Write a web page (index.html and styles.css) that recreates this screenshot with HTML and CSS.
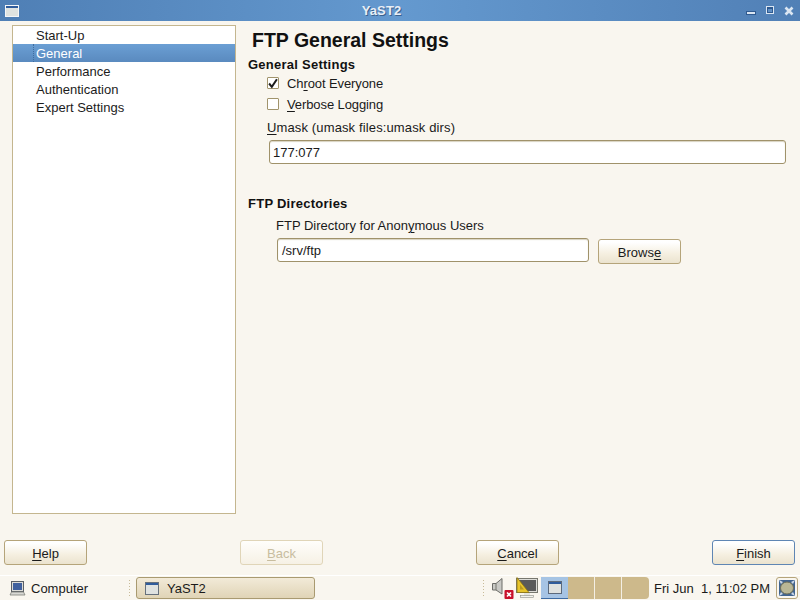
FILE: index.html
```html
<!DOCTYPE html>
<html lang="en">
<head>
<meta charset="utf-8">
<title>YaST2</title>
<link rel="stylesheet" href="styles.css">
</head>
<body>
<div class="desktop">
  <header class="titlebar">
    <svg class="win-icon" width="14" height="12" viewBox="0 0 14 12"><rect x="0.5" y="0.5" width="13" height="11" fill="#dfe3e0" stroke="#f4f6f8"/><rect x="1" y="1" width="12" height="2" fill="#2f5c9c"/></svg>
    <span class="title-text">YaST2</span>
    <div class="win-controls">
      <svg class="win-min" width="10" height="5" viewBox="0 0 10 5"><rect x="0.5" y="0.5" width="9" height="3" fill="#dbe6f2" stroke="#2f5a90"/></svg>
      <svg width="8" height="9" viewBox="0 0 8 9"><rect x="0.5" y="0.5" width="7" height="7" fill="#2f5a90" stroke="#dbe6f2"/><rect x="2" y="3" width="4" height="3" fill="#5f8fc4"/></svg>
      <svg width="10" height="10" viewBox="0 0 10 10"><path d="M1.5 1.5L8.5 8.5M8.5 1.5L1.5 8.5" stroke="#dbe6f2" stroke-width="2.6"/></svg>
    </div>
  </header>

  <main class="content">
    <ul class="sidebar">
      <li class="side-item">Start-Up</li>
      <li class="side-item selected">General</li>
      <li class="side-item">Performance</li>
      <li class="side-item">Authentication</li>
      <li class="side-item">Expert Settings</li>
    </ul>
    <section class="panel">
      <h1 class="heading">FTP General Settings</h1>
      <h2 class="group-title first">General Settings</h2>
      <div class="group-body">
        <label class="check-row">
          <span class="checkbox"><svg width="11" height="11" viewBox="0 0 11 11"><path d="M1.2 5.500L4.200 9.200L9.800 0.800" fill="none" stroke="#1c1c1c" stroke-width="2.200"/></svg></span>
          <span>Ch<u>r</u>oot Everyone</span>
        </label>
        <label class="check-row second">
          <span class="checkbox"></span>
          <span><u>V</u>erbose Logging</span>
        </label>
        <div class="field-label umask-label"><u>U</u>mask (umask files:umask dirs)</div>
        <div class="input umask">177:077</div>
      </div>
      <h2 class="group-title dirs">FTP Directories</h2>
      <div class="dir-body">
        <div class="field-label dir-label">FTP Directory for Anon<u>y</u>mous Users</div>
        <div class="dir-row">
          <div class="input dir-input">/srv/ftp</div>
          <div class="button browse">Brows<u>e</u></div>
        </div>
      </div>
    </section>
  </main>

  <footer class="actions">
    <div class="button action"><span><u>H</u>elp</span></div>
    <div class="button action disabled"><span><u>B</u>ack</span></div>
    <div class="button action"><span><u>C</u>ancel</span></div>
    <div class="button action focus"><span><u>F</u>inish</span></div>
  </footer>

  <nav class="taskbar">
    <div class="menu-item">
      <svg width="17" height="17" viewBox="0 0 17 17"><rect x="2.500" y="1.500" width="12" height="10" fill="#dcdcd8" stroke="#5a5f66"/><rect x="4" y="3" width="9" height="7" fill="#40609e"/><path d="M1 15L2.500 12H14.500L16 15Z" fill="#d8d8d4" stroke="#7d8078" stroke-width="0.800"/></svg>
      <span>Computer</span>
    </div>
    <div class="handle"></div>
    <div class="task">
      <svg width="14" height="13" viewBox="0 0 14 13"><rect x="0.500" y="0.500" width="13" height="12" fill="#dfe2e0" stroke="#66707c"/><rect x="1" y="1" width="12" height="2" fill="#2f5c9c"/></svg>
      <span>YaST2</span>
    </div>
    <div class="tray">
      <div class="handle tray-handle"></div>
      <svg class="tray-sound" width="24" height="22" viewBox="0 0 24 22"><path d="M1.500 6.500H5L11 1.500V17L5 13H1.500Z" fill="#c9c9c5" stroke="#6c6c68"/><path d="M5 6.500V13" stroke="#77776f"/><rect x="13.500" y="13" width="9" height="9" rx="1" fill="#c8102a"/><path d="M16 15.500L20 19.500M20 15.500L16 19.500" stroke="#fff" stroke-width="1.600"/></svg>
      <svg class="tray-screen" width="22" height="22" viewBox="0 0 22 22"><rect x="0.500" y="1.500" width="21" height="14" fill="#dcdcd8" stroke="#77776f"/><rect x="2" y="3" width="18" height="11" fill="#5a5a5a"/><path d="M1 0.500L13 15.500H1Z" fill="#e7c42c" stroke="#8a7414" stroke-width="0.800"/><path d="M4 12.500H8L4 7.500Z" fill="#b99a20"/><rect x="8" y="16" width="6" height="3" fill="#e4e4e0"/><rect x="4.500" y="18.500" width="13" height="2" fill="#f2f2ee" stroke="#8c8c86" stroke-width="0.600"/></svg>
      <div class="pager">
        <div class="workspace active">
          <svg width="14" height="13" viewBox="0 0 14 13"><rect x="0.500" y="0.500" width="13" height="12" fill="#dfe2e0" stroke="#5c6a7c"/><rect x="1" y="1" width="12" height="2" fill="#2f5c9c"/></svg>
        </div>
        <div class="workspace"></div>
        <div class="workspace"></div>
        <div class="workspace"></div>
      </div>
    </div>
    <div class="clock">Fri Jun &nbsp;1, 11:02 PM</div>
    <div class="show-desktop">
      <svg width="18" height="18" viewBox="0 0 18 18"><rect x="1" y="1" width="16" height="16" fill="#41648f"/><ellipse cx="9" cy="9" rx="6.500" ry="6" fill="#b9b795" stroke="#6e6e58"/><path d="M1 1L5 3L3 5ZM17 1L13 3L15 5ZM1 17L5 15L3 13ZM17 17L13 15L15 13Z" fill="#cfd9e6"/></svg>
    </div>
  </nav>
</div>
</body>
</html>
```
FILE: styles.css
```css
* { box-sizing: border-box; }
html, body { margin: 0; padding: 0; }
body {
  font-family: "Liberation Sans", sans-serif;
  font-size: 13px;
  color: #1a1a1a;
  background: #f9f6ef;
}
.desktop {
  width: 800px;
  height: 600px;
  display: flex;
  flex-direction: column;
  overflow: hidden;
}
u { text-underline-offset: 2px; text-decoration-thickness: 1px; }

.titlebar {
  height: 21px;
  flex: none;
  display: flex;
  align-items: center;
  padding: 0 6px 0 5px;
  background: linear-gradient(to right, #4f7fb5, #6499cf 50%, #5180b6);
}
.title-text {
  flex: 1;
  text-align: center;
  color: #e8eef6;
  font-weight: bold;
  font-size: 13px;
  letter-spacing: 0.1px;
  margin-right: 2px;
  text-shadow: 1px 1px 0 #3a628f;
}
.win-controls {
  display: flex;
  align-items: center;
  gap: 10px;
}
.win-min { margin-top: 5px; }

.content {
  flex: 1;
  display: flex;
  padding: 4px 14px 0 12px;
  min-height: 0;
}
.sidebar {
  list-style: none;
  margin: 0;
  padding: 0;
  width: 224px;
  height: 489px;
  flex: none;
  background: #fff;
  border: 1px solid #c4b68f;
}
.side-item {
  height: 18px;
  line-height: 19px;
  padding-left: 23px;
  color: #1c1c1c;
}
.selected {
  color: #fff;
  background: linear-gradient(to bottom, #6b9fd4, #5a8abf);
  position: relative;
}
.selected::before {
  content: "";
  position: absolute;
  left: 20px;
  top: 0;
  bottom: 0;
  border-left: 1px dotted #3f6d9f;
}
.panel {
  flex: 1;
  padding-left: 12px;
  min-width: 0;
}
.heading {
  margin: 0;
  font-size: 19.5px;
  font-weight: bold;
  line-height: 22px;
  padding: 4px 0 0 4px;
  color: #111;
}
.group-title {
  margin: 0;
  font-size: 13px;
  font-weight: bold;
  letter-spacing: 0.25px;
  line-height: 15px;
  color: #111;
}
.first { margin-top: 6px; }
.group-body { padding-left: 19px; }
.check-row {
  display: flex;
  align-items: center;
  gap: 8px;
  height: 14px;
  margin-top: 4px;
  letter-spacing: -0.1px;
}
.check-row.second { margin-top: 7px; }
.checkbox {
  width: 12px;
  height: 12px;
  flex: none;
  background: #fff;
  border: 1px solid #a1946c;
  border-radius: 1px;
  display: flex;
  align-items: center;
  justify-content: center;
}
.field-label {
  line-height: 15px;
  margin-top: 9px;
}
.umask-label { letter-spacing: 0.13px; }
.input {
  background: #fff;
  border: 1px solid #a0926a;
  border-radius: 3px;
  height: 24px;
  line-height: 23px;
  padding-left: 3px;
  box-shadow: inset 0 1px 1px #d8d2c0;
}
.umask { margin-top: 5px; width: 517px; margin-left: 2px; }
.dirs { margin-top: 32px; }
.dir-body { padding-left: 28px; }
.dir-label { margin-top: 7px; }
.dir-row {
  display: flex;
  align-items: flex-start;
  gap: 9px;
  margin-top: 5px;
  margin-left: 1px;
}
.dir-input { width: 312px; padding-left: 4px; }
.button {
  height: 25px;
  border: 1px solid #b5a47a;
  border-radius: 3px;
  background: linear-gradient(to bottom, #ffffff 10%, #f5efe0 60%, #ebe3cf);
  display: flex;
  align-items: center;
  justify-content: center;
  padding-top: 1px;
}
.browse { width: 83px; margin-top: 1px; }

.actions {
  flex: none;
  height: 35px;
  display: flex;
  justify-content: space-between;
  padding: 0 5px 0 4px;
}
.action { width: 83px; }
.disabled { color: #c8bd9f; border-color: #e0d5b8; background: linear-gradient(to bottom, #fffefb, #f6f1e5); }
.focus { border-color: #5f86b4; }

.taskbar {
  flex: none;
  height: 25px;
  display: flex;
  align-items: center;
  background: #f9f6ef;
  border-top: 1px solid #fff;
}
.menu-item {
  display: flex;
  align-items: center;
  gap: 5px;
  padding-left: 9px;
  width: 128px;
  flex: none;
}
.handle {
  width: 4px;
  height: 19px;
  flex: none;
  background-image: radial-gradient(circle, #c8bb98 0.7px, transparent 0.8px);
  background-size: 3px 3px;
}
.task {
  width: 179px;
  height: 22px;
  margin-left: 4px;
  flex: none;
  display: flex;
  align-items: center;
  gap: 8px;
  padding-left: 8px;
  border: 1px solid #a99a70;
  border-radius: 3px;
  background: linear-gradient(to bottom, #f2ead8, #e0d4b6);
}
.tray {
  display: flex;
  align-items: center;
  margin-left: 167px;
  flex: none;
}
.tray-handle { margin-right: 5px; }
.tray-sound { margin-right: 1px; }
.tray-screen { margin-right: 3px; }
.pager {
  display: flex;
  height: 22px;
  width: 108px;
  background: #cdb98b;
  border-radius: 0 4px 4px 0;
  overflow: hidden;
}
.workspace {
  width: 27px;
  border-right: 1px solid #f4efe4;
  display: flex;
  align-items: center;
  justify-content: center;
}
.workspace:last-child { border-right: 0; }
.active {
  background: #a6c4e4;
  border-right: 0;
  border-bottom: 1px solid #3d6ba3;
}
.clock {
  flex: none;
  margin-left: 5px;
  white-space: pre;
}
.show-desktop {
  width: 22px;
  height: 22px;
  flex: none;
  margin-left: 6px;
  border: 1px solid #b5a47a;
  border-radius: 3px;
  display: flex;
  align-items: center;
  justify-content: center;
}
```
